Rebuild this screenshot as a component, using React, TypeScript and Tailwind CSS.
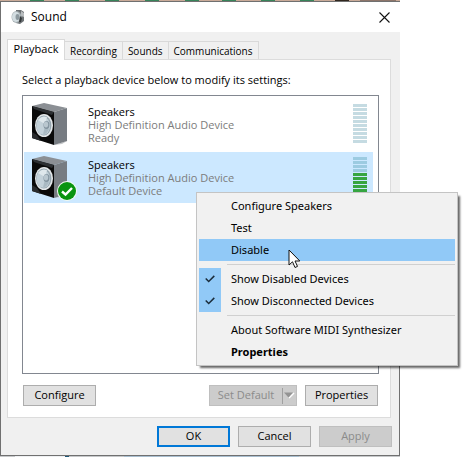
const TABS = ["Playback", "Recording", "Sounds", "Communications"]

interface Device {
  name: string
  driver: string
  status: string
  level: number
  selected?: boolean
}

const DEVICES: Device[] = [
  { name: "Speakers", driver: "High Definition Audio Device", status: "Ready", level: 0 },
  { name: "Speakers", driver: "High Definition Audio Device", status: "Default Device", level: 6, selected: true },
]

const BARS = Array.from({ length: 10 }, (_, i) => i)

function SpeakerIcon({ checked }: { checked?: boolean }) {
  return (
    <svg width="46" height="46" viewBox="0 0 46 46" className="shrink-0" aria-hidden="true">
      <path d="M22 43L36 38.500L30 42Z" fill="#c4c6c8" />
      <path d="M0 4L12 1L35 6L22 10Z" fill="#8b8f94" />
      <path d="M22 10L35 6V39L22 43Z" fill="#777c82" />
      <path d="M0 4L22 10V43L0 36Z" fill="#0a0a0a" />
      <path d="M0 4L22 10L20 13L2 7Z" fill="#2c2f32" />
      <path d="M0 36V30L5 33L9 39Z" fill="#2a2c2e" />
      <ellipse cx="12" cy="23.500" rx="9" ry="11.500" fill="#e3e7e9" />
      <ellipse cx="11.800" cy="23.500" rx="7.600" ry="10" fill="#97a7b0" />
      <ellipse cx="11.300" cy="23.800" rx="6.800" ry="9" fill="#c3d1d9" />
      <path d="M6 18Q10 13 15 15L13 22Z" fill="#dfe8ec" />
      <path d="M13 24L17 27Q15 32 11 32.500Z" fill="#a9b9c2" />
      <ellipse cx="14.500" cy="23" rx="3" ry="4" fill="#8495a0" />
      <ellipse cx="14" cy="22.500" rx="2.200" ry="3" fill="#b9c7cf" />
      {checked && (
        <>
          <circle cx="35" cy="36" r="10" fill="#f2faf2" />
          <circle cx="35" cy="36" r="9" fill="#0a9410" />
          <path d="M30 36.500L33.500 39.500L40 33" fill="none" stroke="#fff" strokeWidth="2.400" />
        </>
      )}
    </svg>
  )
}

function TitleIcon() {
  return (
    <svg width="14" height="16" viewBox="0 0 14 16" aria-hidden="true">
      <path d="M5 1L10 1L13 3V12L9 15L5 14Z" fill="#6d7275" />
      <path d="M10 2L13 4V8L10 7Z" fill="#b9bdbf" />
      <ellipse cx="5.500" cy="8" rx="5" ry="6" fill="#a4adb1" />
      <ellipse cx="5" cy="8" rx="4" ry="5" fill="#d3dde1" />
      <ellipse cx="6.500" cy="8" rx="2" ry="3" fill="#8d999f" />
      <path d="M9 7L11 9L10 13L8 13Z" fill="#34383a" />
    </svg>
  )
}

function CheckMark() {
  return (
    <svg width="10" height="8" viewBox="0 0 10 8" aria-hidden="true">
      <path d="M0.700 3.500L3.700 6.500L9.300 0.900" fill="none" stroke="#1b2c3b" strokeWidth="1.500" />
    </svg>
  )
}

function LevelMeter({ level, selected }: { level: number; selected?: boolean }) {
  return (
    <div className="flex w-[14px] shrink-0 flex-col gap-px">
      {BARS.map((i) => (
        <span
          key={i}
          className={`h-[3px] ${i >= 10 - level ? "bg-[#36a541]" : selected ? "bg-[#9ccbe1]" : "bg-[#c5dbe2]"}`}
        />
      ))}
    </div>
  )
}

function DeviceRow({ device }: { device: Device }) {
  return (
    <li
      role="option"
      aria-selected={!!device.selected}
      className={`flex h-[51px] items-start pl-2 pr-1.5 ${device.selected ? "bg-[#cce8ff]" : ""}`}
    >
      <div className="pt-[3px]">
        <SpeakerIcon checked={device.selected} />
      </div>
      <div className="flex-1 pl-2.5 pt-1.5 leading-[13px] text-[#7c7c7c]">
        <p className="text-black">{device.name}</p>
        <p>{device.driver}</p>
        <p>{device.status}</p>
      </div>
      <div className="pt-[5px]">
        <LevelMeter level={device.level} selected={device.selected} />
      </div>
    </li>
  )
}

interface MenuItemProps {
  label: string
  checked?: boolean
  active?: boolean
  bold?: boolean
}

function MenuItem({ label, checked, active, bold }: MenuItemProps) {
  return (
    <button
      type="button"
      role={checked ? "menuitemcheckbox" : "menuitem"}
      aria-checked={checked}
      className={`flex h-[22px] w-full items-center text-left ${active ? "bg-[#91c9f7]" : ""} ${bold ? "font-bold" : ""}`}
    >
      <span className={`flex h-full w-[22px] items-center justify-center ${checked ? "bg-[#91c9f7]" : ""}`}>
        {checked && <CheckMark />}
      </span>
      <span className="pl-2.5">{label}</span>
    </button>
  )
}

function Separator() {
  return <div role="separator" className="my-[3px] ml-7 h-px bg-[#d0d0d0]" />
}

function ContextMenu() {
  return (
    <div
      role="menu"
      className="absolute left-[196px] top-[192px] w-[262px] border border-[#c4c4c4] bg-[#f1f1f1] p-0.5 font-['Noto_Sans',sans-serif] text-[11px] text-black shadow-[3px_3px_2px_-1px_#00000099]"
    >
      <MenuItem label="Configure Speakers" />
      <MenuItem label="Test" />
      <MenuItem label="Disable" active />
      <Separator />
      <MenuItem label="Show Disabled Devices" checked />
      <MenuItem label="Show Disconnected Devices" checked />
      <Separator />
      <MenuItem label="About Software MIDI Synthesizer" />
      <MenuItem label="Properties" bold />
      {/* pointer over the active item */}
      <svg width="13" height="20" viewBox="0 0 13 20" className="absolute left-[91px] top-14" aria-hidden="true">
        <path d="M1 1V16L4.500 12.800L7 18.500L9.500 17.400L7 12H11.800Z" fill="#fff" stroke="#111" />
      </svg>
    </div>
  )
}

const BUTTON = "h-[21px] w-[73px] border"
const BUTTON_NORMAL = "border-[#adadad] bg-[#e1e1e1] text-black"
const BUTTON_DISABLED = "border-[#bfbfbf] bg-[#cccccc] text-[#8b8b8b]"

export default function App() {
  return (
    <div className="relative bg-white pr-[63px] font-['Open_Sans','Noto_Sans',sans-serif] text-[11px] text-black">
      {/* sliver of the window behind the dialog */}
      <svg className="block h-px w-full bg-[#c9aa98]" aria-hidden="true">
        {[30, 65, 105, 145, 185, 222, 261, 300].map((x) => (
          <rect key={x} x={x} width="14" height="1" fill="#37845a" />
        ))}
        <rect x="335" width="14" height="1" fill="#30271f" />
        <rect x="360" width="36" height="1" fill="#8d756a" />
      </svg>

      <main className="relative border-b border-l border-t border-[#707070] bg-[#f0f0f0]">
        <header className="flex h-[30px] items-center bg-white pl-2.5 pr-2">
          <TitleIcon />
          <h1 className="flex-1 pl-1.5 text-[12px]">Sound</h1>
          <button type="button" aria-label="Close" className="flex size-4 items-center justify-center">
            <svg width="11" height="11" viewBox="0 0 11 11" aria-hidden="true">
              <path d="M0.500 0.500L10.500 10.500M10.500 0.500L0.500 10.500" stroke="#111" strokeWidth="1.100" />
            </svg>
          </button>
        </header>

        <div className="pl-1.5 pr-[9px] pt-[7px]">
          <div role="tablist" className="flex h-5 items-end text-[10px]">
            {TABS.map((tab, i) => (
              <button
                key={tab}
                type="button"
                role="tab"
                aria-selected={i === 0}
                className={
                  i === 0
                    ? "relative -mb-px h-[21px] w-[58px] shrink-0 border border-b-0 border-[#d9d9d9] bg-white pb-0.5 text-[11px]"
                    : "h-[18px] shrink-0 border border-b-0 border-l-0 border-[#d9d9d9] px-[5px] pt-px"
                }
              >
                {tab}
              </button>
            ))}
          </div>

          <section role="tabpanel" className="border border-[#dcdcdc] bg-white px-3.5 pb-[11px]">
            <p className="h-[35px] pt-3 leading-4">Select a playback device below to modify its settings:</p>
            <ul
              role="listbox"
              aria-label="Playback devices"
              className="mr-[-3px] flex h-[279px] flex-col gap-0.5 border border-[#828790] py-[3px] pl-px pr-[5px]"
            >
              {DEVICES.map((device, i) => (
                <DeviceRow key={i} device={device} />
              ))}
            </ul>
            <div className="-mr-0.5 ml-px flex pt-[11px]">
              <button type="button" className={`${BUTTON} ${BUTTON_NORMAL}`}>Configure</button>
              <button type="button" disabled className={`${BUTTON_DISABLED} ml-auto flex h-[21px] w-[88px] items-center border`}>
                <span className="flex-1 text-center">Set Default</span>
                <span className="flex h-4 w-3.5 items-center justify-center border-l border-[#a0a0a0]">
                  <svg width="11" height="7" viewBox="0 0 11 7" aria-hidden="true">
                    <path d="M5 6L10 1" stroke="#fff" strokeWidth="1.500" />
                    <path d="M0 0.500H9L4.500 5.500Z" fill="#939393" />
                  </svg>
                </span>
              </button>
              <button type="button" className={`${BUTTON} ${BUTTON_NORMAL} ml-2`}>Properties</button>
            </div>
          </section>

          <footer className="-mr-px flex justify-end gap-2 pb-2 pt-2">
            <button type="button" className="h-[21px] w-[73px] border-2 border-[#0078d7] bg-[#e1e1e1]">OK</button>
            <button type="button" className={`${BUTTON} ${BUTTON_NORMAL}`}>Cancel</button>
            <button type="button" disabled className={`${BUTTON} ${BUTTON_DISABLED}`}>Apply</button>
          </footer>
        </div>
        <span className="absolute bottom-0 right-0 h-[90px] w-px bg-[#707070]" />
      </main>
      <svg className="block h-px w-full bg-[#c6c8ca]" aria-hidden="true">
        <rect x="15" width="50" height="1" fill="#eef0f2" />
        <rect x="65" width="4" height="1" fill="#1f5878" />
        <rect x="124" width="175" height="1" fill="#a9bfd0" />
      </svg>
      <ContextMenu />
    </div>
  )
}
